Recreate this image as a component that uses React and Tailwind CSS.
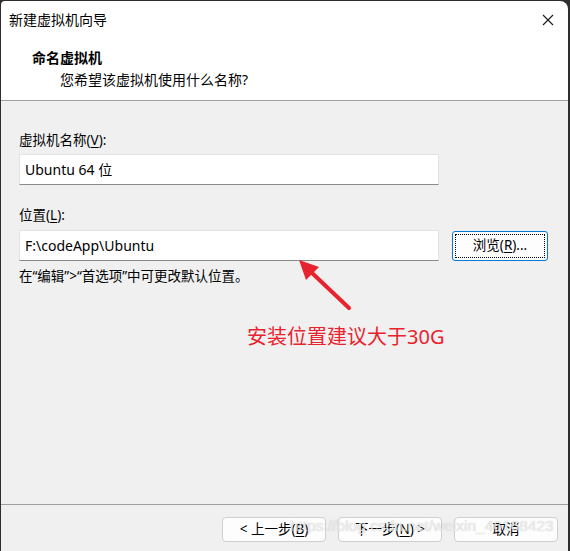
import React from 'react';

const font = { fontFamily: '"Noto Sans", "Noto Sans CJK SC", sans-serif' };

const Underlined = ({ children }) => <span className="underline underline-offset-2">{children}</span>;

// red pointer arrow, drawn over the body panel
const Arrow = () => (
  <svg className="absolute left-[290px] top-[151px]" width="70" height="70" viewBox="0 0 70 70">
    <line x1="58" y1="56" x2="20" y2="20" stroke="#e8232d" strokeWidth="4" strokeLinecap="round" />
    <polygon points="8,8 28,15 15,28" fill="#e8232d" />
  </svg>
);

const FooterButton = ({ children }) => (
  <button className="w-[104px] h-[25px] bg-[#fdfdfd] border border-[#cfcfcf] rounded-[4px] text-[13.5px] text-black flex items-center justify-center">
    {children}
  </button>
);

const App = () => {
  return (
    <div className="w-[570px] h-[551px] bg-[#2e2e2e] overflow-hidden" style={font}>
      <div className="relative h-full ml-px mr-[2px] mt-px mb-[2px] rounded-tr-[8px] rounded-tl-[4px] overflow-hidden flex flex-col bg-white text-black">
        {/* title bar */}
        <div className="h-[37px] flex items-center justify-between pl-[8px] pr-[14px]">
          <span className="text-[14px] leading-none">新建虚拟机向导</span>
          <svg width="12" height="12" viewBox="0 0 12 12">
            <path d="M1 1 L11 11 M11 1 L1 11" stroke="#1a1a1a" strokeWidth="1.1" />
          </svg>
        </div>

        {/* header */}
        <div className="h-[63px] border-b border-[#a0a0a0] pl-[31px] pt-[10px]">
          <div className="text-[14px] font-bold leading-[20px]">命名虚拟机</div>
          <div className="text-[14px] leading-[20px] pl-[28px] mt-[2px]">您希望该虚拟机使用什么名称?</div>
        </div>

        {/* body */}
        <div className="relative flex-1 bg-[#f0f0f0] pl-[18px] pt-[29px] border-b border-[#a0a0a0]">
          <div className="text-[13.5px] leading-[20px]">
            虚拟机名称(<Underlined>V</Underlined>):
          </div>
          <div className="mt-[4px] w-[420px] h-[31px] bg-white border border-[#e3e3e3] border-b-[#8a8a8a] flex items-center pl-[5px] text-[14px]">
            Ubuntu 64 位
          </div>

          <div className="mt-[20px] text-[13.5px] leading-[20px]">
            位置(<Underlined>L</Underlined>):
          </div>
          <div className="mt-[5px] flex items-center gap-[13px]">
            <div className="w-[420px] h-[31px] bg-white border border-[#e3e3e3] border-b-[#8a8a8a] flex items-center pl-[5px] text-[14px]">
              F:\codeApp\Ubuntu
            </div>
            <div className="w-[96px] h-[30px] rounded-[3px] border border-[#0078d4] bg-[#fdfdfd] p-[2px]">
              <div className="w-full h-full border border-dotted border-black flex items-center justify-center text-[13.5px]">
                浏览(<Underlined>R</Underlined>)...
              </div>
            </div>
          </div>

          <div className="mt-[5px] text-[13.5px] leading-[20px]">在“编辑”&gt;“首选项”中可更改默认位置。</div>

          <div className="mt-[38px] pl-[228px] text-[20px] leading-[26px] text-[#e8232d]">安装位置建议大于30G</div>

          <Arrow />
        </div>

        {/* footer */}
        <div className="h-[47px] bg-[#f0f0f0] flex items-start justify-end gap-[12px] pt-[12px] pr-[10px]">
          <FooterButton>&lt; 上一步(<Underlined>B</Underlined>)</FooterButton>
          <FooterButton>下一步(<Underlined>N</Underlined>) &gt;</FooterButton>
          <FooterButton>取消</FooterButton>
        </div>

        {/* csdn watermark */}
        <div
          className="absolute left-[289px] top-[513px] text-[15.5px] text-white/70 pointer-events-none whitespace-nowrap"
          style={{ fontFamily: '"Liberation Sans", sans-serif', textShadow: '0 0 1px rgba(120,120,120,0.5)' }}
        >
          https://blog.csdn.net/weixin_46168423
        </div>
      </div>
    </div>
  );
};

export default App;
